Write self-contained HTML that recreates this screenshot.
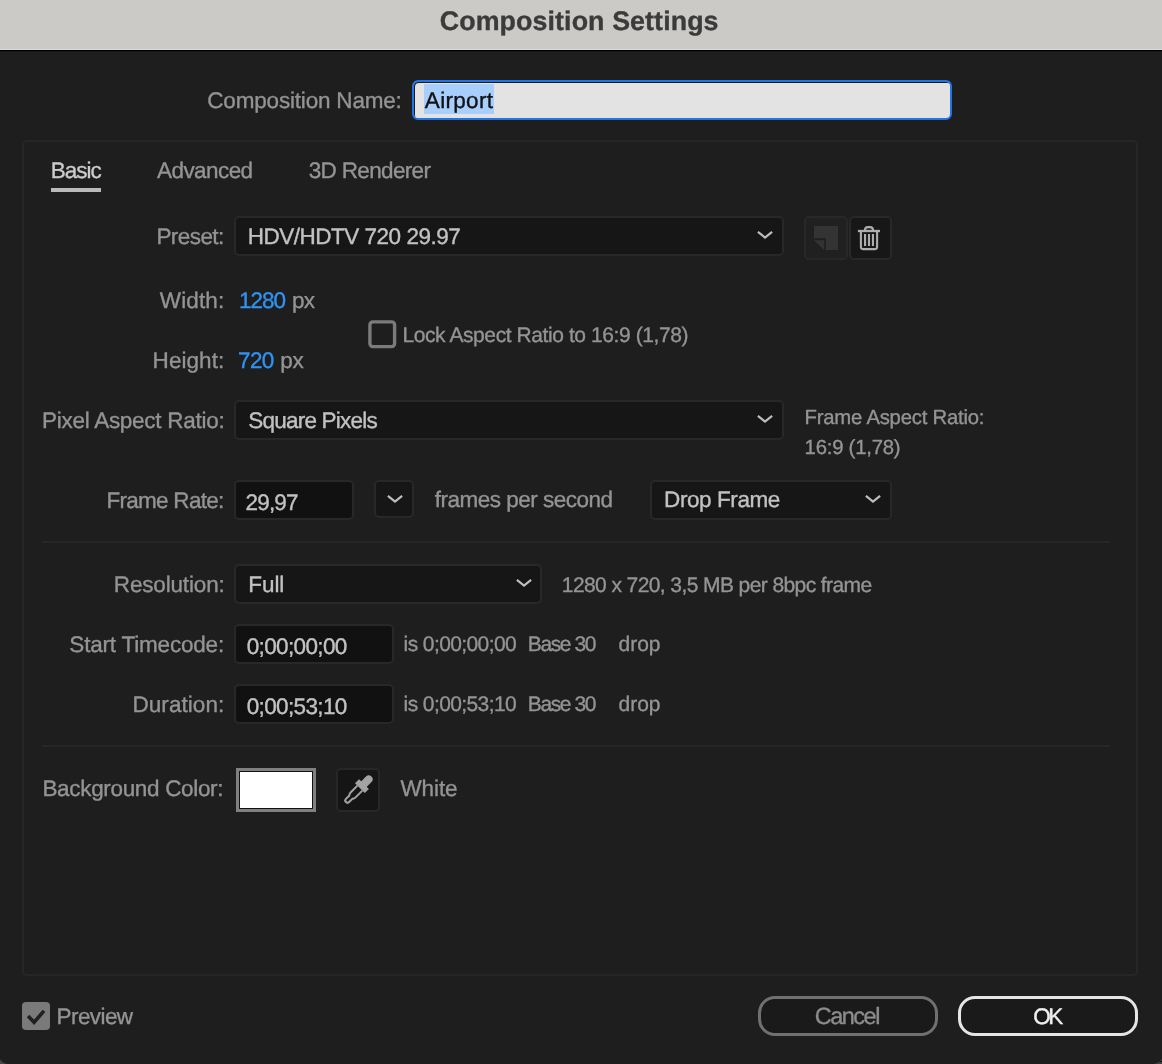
<!DOCTYPE html>
<html><head><meta charset="utf-8"><title>Composition Settings</title>
<style>
html,body{margin:0;padding:0;}
body{width:1162px;height:1064px;background:#1e1e1e;position:relative;overflow:hidden;font-family:"Liberation Sans",sans-serif;}
.t{position:absolute;white-space:pre;-webkit-text-stroke:0.35px currentColor;text-rendering:geometricPrecision;}
.b{position:absolute;}
#root{position:absolute;left:0;top:0;width:1162px;height:1064px;will-change:transform;}
</style></head><body>
<div id="root">
<div class="b" style="left:0px;top:0px;width:1162px;height:49px;background:#cbcac6;"></div>
<div class="b" style="left:0px;top:49px;width:1162px;height:1px;background:#dddcd9;"></div>
<div class="b" style="left:0px;top:50px;width:1162px;height:1px;background:#000;"></div>
<div class="b" style="left:0px;top:51px;width:1162px;height:1px;background:#161616;"></div>
<div class="t" style="left:439.79px;top:6.11px;font-size:26.8px;line-height:30px;color:#3b3b3b;letter-spacing:0.097px;font-weight:bold;">Composition Settings</div>
<div class="t" style="left:207.32px;top:88.10px;font-size:22.5px;line-height:25px;color:#949494;letter-spacing:-0.190px;">Composition Name:</div>
<div class="b" style="left:412px;top:80px;width:540px;height:40px;background:#e3e3e3;border:2px solid #2173e8;border-radius:6px;box-sizing:border-box;box-shadow:inset 1px 1px 0 0 #1a1a1a;"></div>
<div class="b" style="left:424px;top:84px;width:70px;height:30px;background:#a8cefc;"></div>
<div class="t" style="left:424.85px;top:88.10px;font-size:22.5px;line-height:25px;color:#111;letter-spacing:0.313px;">Airport</div>
<div class="b" style="left:22px;top:140px;width:1116px;height:836px;border:2px solid #262626;box-sizing:border-box;border-radius:5px;"></div>
<div class="t" style="left:50.79px;top:158.10px;font-size:22.5px;line-height:25px;color:#cccccc;letter-spacing:-1.023px;">Basic</div>
<div class="b" style="left:51px;top:188px;width:50px;height:4px;background:#bababa;"></div>
<div class="t" style="left:157.00px;top:158.10px;font-size:22.5px;line-height:25px;color:#949494;letter-spacing:-0.565px;">Advanced</div>
<div class="t" style="left:308.70px;top:158.10px;font-size:22.5px;line-height:25px;color:#949494;letter-spacing:-0.657px;">3D Renderer</div>
<div class="t" style="left:156.45px;top:224.10px;font-size:22.5px;line-height:25px;color:#949494;letter-spacing:-0.578px;">Preset:</div>
<div class="b" style="left:234px;top:216px;width:550px;height:40px;background:#161616;border:2px solid #282828;border-radius:5px;box-sizing:border-box;"></div>
<div class="t" style="left:247.86px;top:224.10px;font-size:22.5px;line-height:25px;color:#c2c2c2;letter-spacing:-0.502px;">HDV/HDTV 720 29.97</div>
<svg class="b" style="left:755.9px;top:229.60000000000002px" width="18" height="11" viewBox="0 0 18 11"><path d="M1.900 1.800 L9 7.500 L16.100 1.800" fill="none" stroke="#bebebe" stroke-width="2.2" stroke-linecap="butt" stroke-linejoin="miter"/></svg>
<div class="b" style="left:804px;top:216px;width:44px;height:44px;background:#202020;border:2px solid #282828;border-radius:5px;box-sizing:border-box;"></div>
<div class="b" style="left:849px;top:216px;width:43px;height:44px;background:#171717;border:2px solid #282828;border-radius:5px;box-sizing:border-box;"></div>
<svg class="b" style="left:805px;top:217px" width="42" height="42" viewBox="0 0 42 42"><path d="M9 9 H33 V33 H20.800 V21.300 H9 Z" fill="#333"/><path d="M9 23.200 H19.100 V33 Z" fill="#333"/></svg>
<svg class="b" style="left:849px;top:217px" width="42" height="42" viewBox="0 0 42 42" fill="none" stroke="#adadad" stroke-width="2.100"><path d="M8.900 14 H31" stroke-width="2.300"/><path d="M16 13.500 V13.100 a3 3 0 0 1 3 -3 h2 a3 3 0 0 1 3 3 V13.500"/><path d="M11.900 14.500 V30.100 a2 2 0 0 0 2 2 H26.100 a2 2 0 0 0 2 -2 V14.500"/><path d="M16.050 17 V29 M20 17 V29 M23.950 17 V29"/></svg>
<div class="t" style="left:159.83px;top:288.10px;font-size:22.5px;line-height:25px;color:#949494;letter-spacing:0.130px;">Width:</div>
<div class="t" style="left:238.96px;top:288.10px;font-size:22.5px;line-height:25px;color:#2f93f2;letter-spacing:-1.037px;">1280</div>
<div class="t" style="left:292.08px;top:288.10px;font-size:22.5px;line-height:25px;color:#949494;letter-spacing:-0.830px;">px</div>
<div class="t" style="left:152.60px;top:348.10px;font-size:22.5px;line-height:25px;color:#949494;letter-spacing:0.063px;">Height:</div>
<div class="t" style="left:238.08px;top:348.10px;font-size:22.5px;line-height:25px;color:#2f93f2;letter-spacing:-0.690px;">720</div>
<div class="t" style="left:280.28px;top:348.10px;font-size:22.5px;line-height:25px;color:#949494;letter-spacing:-0.180px;">px</div>
<svg class="b" style="left:368px;top:320px" width="29" height="29" viewBox="0 0 29 29"><rect x="1.900" y="1.900" width="24.700" height="24.700" rx="3" fill="none" stroke="#7b7b7b" stroke-width="3.400"/></svg>
<div class="t" style="left:402.45px;top:323.62px;font-size:21px;line-height:23px;color:#949494;letter-spacing:-0.412px;">Lock Aspect Ratio to 16:9 (1,78)</div>
<div class="t" style="left:41.98px;top:408.10px;font-size:22.5px;line-height:25px;color:#949494;letter-spacing:-0.267px;">Pixel Aspect Ratio:</div>
<div class="b" style="left:234px;top:400px;width:550px;height:40px;background:#161616;border:2px solid #282828;border-radius:5px;box-sizing:border-box;"></div>
<div class="t" style="left:248.30px;top:408.10px;font-size:22.5px;line-height:25px;color:#c2c2c2;letter-spacing:-0.791px;">Square Pixels</div>
<svg class="b" style="left:755.9px;top:413.6px" width="18" height="11" viewBox="0 0 18 11"><path d="M1.900 1.800 L9 7.500 L16.100 1.800" fill="none" stroke="#bebebe" stroke-width="2.2" stroke-linecap="butt" stroke-linejoin="miter"/></svg>
<div class="t" style="left:804.58px;top:407.37px;font-size:20.3px;line-height:22px;color:#949494;letter-spacing:-0.219px;">Frame Aspect Ratio:</div>
<div class="t" style="left:804.58px;top:437.37px;font-size:20.3px;line-height:22px;color:#949494;letter-spacing:-0.214px;">16:9 (1,78)</div>
<div class="t" style="left:106.43px;top:488.10px;font-size:22.5px;line-height:25px;color:#949494;letter-spacing:-0.720px;">Frame Rate:</div>
<div class="b" style="left:234px;top:480px;width:120px;height:40px;background:#111111;border:2px solid #282828;border-radius:5px;box-sizing:border-box;"></div>
<div class="t" style="left:245.56px;top:490.10px;font-size:22.5px;line-height:25px;color:#c2c2c2;letter-spacing:-0.838px;">29,97</div>
<div class="b" style="left:374px;top:480px;width:40px;height:38px;background:#161616;border:2px solid #282828;border-radius:5px;box-sizing:border-box;"></div>
<svg class="b" style="left:386px;top:493.8px" width="18" height="11" viewBox="0 0 18 11"><path d="M1.900 1.800 L9 7.500 L16.100 1.800" fill="none" stroke="#bebebe" stroke-width="2.2" stroke-linecap="butt" stroke-linejoin="miter"/></svg>
<div class="t" style="left:434.66px;top:487.10px;font-size:22.5px;line-height:25px;color:#949494;letter-spacing:-0.500px;">frames per second</div>
<div class="b" style="left:650px;top:480px;width:242px;height:40px;background:#161616;border:2px solid #282828;border-radius:5px;box-sizing:border-box;"></div>
<div class="t" style="left:664.11px;top:487.10px;font-size:22.5px;line-height:25px;color:#c2c2c2;letter-spacing:-0.417px;">Drop Frame</div>
<svg class="b" style="left:864px;top:493.90000000000003px" width="18" height="11" viewBox="0 0 18 11"><path d="M1.900 1.800 L9 7.500 L16.100 1.800" fill="none" stroke="#bebebe" stroke-width="2.2" stroke-linecap="butt" stroke-linejoin="miter"/></svg>
<div class="b" style="left:42px;top:541px;width:1068px;height:2px;background:#262626;"></div>
<div class="b" style="left:42px;top:745px;width:1068px;height:2px;background:#262626;"></div>
<div class="t" style="left:113.83px;top:572.10px;font-size:22.5px;line-height:25px;color:#949494;letter-spacing:-0.166px;">Resolution:</div>
<div class="b" style="left:234px;top:564px;width:308px;height:40px;background:#161616;border:2px solid #282828;border-radius:5px;box-sizing:border-box;"></div>
<div class="t" style="left:248.28px;top:572.10px;font-size:22.5px;line-height:25px;color:#c2c2c2;letter-spacing:-0.050px;">Full</div>
<svg class="b" style="left:514.5px;top:577.8px" width="18" height="11" viewBox="0 0 18 11"><path d="M1.900 1.800 L9 7.500 L16.100 1.800" fill="none" stroke="#bebebe" stroke-width="2.2" stroke-linecap="butt" stroke-linejoin="miter"/></svg>
<div class="t" style="left:561.84px;top:573.62px;font-size:21px;line-height:23px;color:#949494;letter-spacing:-0.590px;">1280 x 720, 3,5 MB per 8bpc frame</div>
<div class="t" style="left:69.32px;top:632.10px;font-size:22.5px;line-height:25px;color:#949494;letter-spacing:-0.194px;">Start Timecode:</div>
<div class="b" style="left:234px;top:624px;width:160px;height:40px;background:#111111;border:2px solid #282828;border-radius:5px;box-sizing:border-box;"></div>
<div class="t" style="left:246.70px;top:634.10px;font-size:22.5px;line-height:25px;color:#c2c2c2;letter-spacing:-0.631px;">0;00;00;00</div>
<div class="t" style="left:403.62px;top:632.62px;font-size:21px;line-height:23px;color:#949494;letter-spacing:-0.598px;">is 0;00;00;00</div>
<div class="t" style="left:527.79px;top:632.62px;font-size:21px;line-height:23px;color:#949494;letter-spacing:-1.408px;">Base 30</div>
<div class="t" style="left:618.54px;top:632.62px;font-size:21px;line-height:23px;color:#949494;letter-spacing:-0.033px;">drop</div>
<div class="t" style="left:132.43px;top:692.10px;font-size:22.5px;line-height:25px;color:#949494;letter-spacing:0.069px;">Duration:</div>
<div class="b" style="left:234px;top:684px;width:160px;height:40px;background:#111111;border:2px solid #282828;border-radius:5px;box-sizing:border-box;"></div>
<div class="t" style="left:246.70px;top:694.10px;font-size:22.5px;line-height:25px;color:#c2c2c2;letter-spacing:-0.631px;">0;00;53;10</div>
<div class="t" style="left:403.62px;top:692.62px;font-size:21px;line-height:23px;color:#949494;letter-spacing:-0.598px;">is 0;00;53;10</div>
<div class="t" style="left:527.79px;top:692.62px;font-size:21px;line-height:23px;color:#949494;letter-spacing:-1.408px;">Base 30</div>
<div class="t" style="left:618.54px;top:692.62px;font-size:21px;line-height:23px;color:#949494;letter-spacing:-0.033px;">drop</div>
<div class="t" style="left:42.43px;top:776.10px;font-size:22.5px;line-height:25px;color:#949494;letter-spacing:-0.328px;">Background Color:</div>
<div class="b" style="left:236px;top:768px;width:80px;height:44px;background:#fff;border:3px solid #808080;box-sizing:border-box;box-shadow:inset 0 0 0 1px #111;"></div>
<div class="b" style="left:336px;top:768px;width:44px;height:44px;background:#151515;border:2px solid #272727;border-radius:5px;box-sizing:border-box;"></div>
<svg class="b" style="left:336px;top:768px" width="44" height="44" viewBox="-22 -22 44 44"><g transform="translate(0.4 -0.4) rotate(45)" fill="#a3a3a3"><path d="M-3.9 -7 V-14.6 a3.900 3.900 0 0 1 7.800 0 V-7 Z"/><rect x="-6.900" y="-7.900" width="13.800" height="5.800"/><path d="M-3.5 -2.100 L-3.5 7.500 Q-3.5 9.500 -2.250 10.500 L-2.250 15.350 A2.250 2.250 0 0 0 2.250 15.350 L2.250 10.500 Q3.500 9.500 3.500 7.500 L3.500 -2.100" fill="none" stroke="#a3a3a3" stroke-width="2" stroke-linejoin="round"/></g></svg>
<div class="t" style="left:400.49px;top:776.10px;font-size:22.5px;line-height:25px;color:#949494;letter-spacing:-0.115px;">White</div>
<div class="b" style="left:22px;top:1002px;width:28px;height:28px;background:#7a7a7a;border-radius:4px;"></div>
<svg class="b" style="left:22px;top:1002px" width="28" height="28" viewBox="0 0 28 28"><path d="M6.100 14.100 L12.100 20.300 L22 8.900" fill="none" stroke="#202020" stroke-width="3.600"/></svg>
<div class="t" style="left:56.62px;top:1004.10px;font-size:22.5px;line-height:25px;color:#949494;letter-spacing:-0.599px;">Preview</div>
<div class="b" style="left:758px;top:996px;width:180px;height:40px;border:3px solid #707070;border-radius:17px;box-sizing:border-box;background:#1a1a1a;"></div>
<div class="t" style="left:814.79px;top:1003.26px;font-size:23.5px;line-height:26px;color:#8c8c8c;letter-spacing:-1.507px;">Cancel</div>
<div class="b" style="left:958px;top:996px;width:180px;height:40px;border:3px solid #e6e6e6;border-radius:17px;box-sizing:border-box;background:#1a1a1a;"></div>
<div class="t" style="left:1033.15px;top:1004.10px;font-size:22.5px;line-height:25px;color:#f0f0f0;letter-spacing:-2.460px;">OK</div>
<svg class="b" style="left:0;top:1056px" width="10" height="8" viewBox="0 0 10 8"><path d="M0 3 Q1.500 6.500 7.500 8 L0 8 Z" fill="#454545"/></svg>
<svg class="b" style="left:1152px;top:1056px" width="10" height="8" viewBox="0 0 10 8"><path d="M10 2.500 Q8.500 6.500 2 8 L10 8 Z" fill="#404040"/><path d="M10 5 Q9.300 5.800 8.300 6" stroke="#000" stroke-width="1" fill="none"/></svg>
</div>
</body></html>
